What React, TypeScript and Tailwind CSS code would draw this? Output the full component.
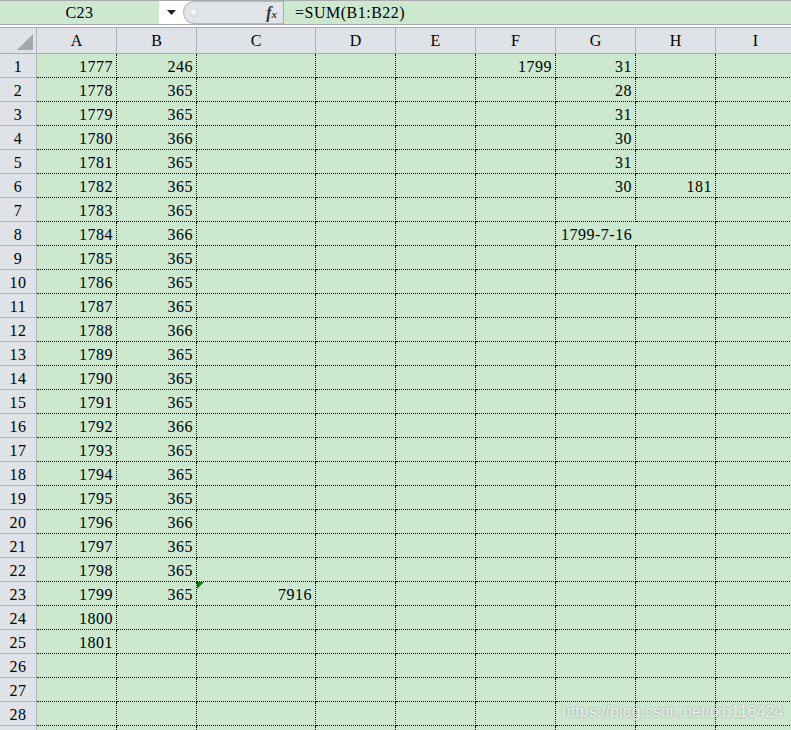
import React from "react";

const cols = [
  { l: "A", w: 80 },
  { l: "B", w: 80 },
  { l: "C", w: 119 },
  { l: "D", w: 80 },
  { l: "E", w: 80 },
  { l: "F", w: 80 },
  { l: "G", w: 80 },
  { l: "H", w: 80 },
  { l: "I", w: 80 },
];

const bVals = [
  "246", "365", "365", "366", "365", "365", "365", "366", "365", "365", "365", "366",
  "365", "365", "365", "366", "365", "365", "365", "366", "365", "365", "365",
];

function cellValue(r: number, c: string): string {
  if (c === "A" && r <= 25) return String(1776 + r);
  if (c === "B" && r <= 23) return bVals[r - 1];
  if (c === "F" && r === 1) return "1799";
  if (c === "G") {
    const g: Record<number, string> = { 1: "31", 2: "28", 3: "31", 4: "30", 5: "31", 6: "30" };
    if (g[r]) return g[r];
  }
  if (c === "H" && r === 6) return "181";
  if (c === "C" && r === 23) return "7916";
  return "";
}

const font = { fontFamily: '"Liberation Serif", "Noto Sans CJK SC", serif' };

export default function App() {
  const rows = Array.from({ length: 29 }, (_, i) => i + 1);
  return (
    <div
      className="relative w-[791px] h-[730px] overflow-hidden bg-[#cce8cf] text-black"
      style={font}
    >
      {/* formula bar */}
      <div className="flex h-[25px] border-t border-b border-[#a9abae] bg-[#cce8cf]">
        <div className="w-[159px] shrink-0 flex items-center justify-center text-[16px] tracking-[0.5px] pt-[1px]">
          C23
        </div>
        <div className="flex w-[124px] shrink-0 bg-white">
          <div className="w-[24px] flex items-center justify-center">
            <svg width="9" height="5" viewBox="0 0 9 5">
              <polygon points="0,0 9,0 4.5,5" fill="#222" />
            </svg>
          </div>
          <div className="relative flex-1 flex items-center justify-end pr-[6px] bg-[#e1e4e8] border-l border-t border-b border-[#b8bbbf] rounded-l-[14px]">
            <div className="absolute left-[6px] top-[7px] w-[8px] h-[8px] rounded-full bg-[radial-gradient(circle_at_40%_40%,#ffffff,#c4c7cb)]" />
            <span className="italic font-bold text-[16px] text-[#333] leading-none" style={font}>
              f<span className="text-[11px]">x</span>
            </span>
          </div>
        </div>
        <div className="flex-1 border-l border-[#a9abae] pl-[11px] flex items-center text-[16px] tracking-[0.5px] pt-[1px]">
          =SUM(B1:B22)
        </div>
      </div>
      <div className="h-[2px] bg-white" />
      {/* column header */}
      <div className="flex h-[27px] border-t border-b border-[#a9abae] bg-[#dfe2e7]">
        <div className="relative w-[37px] shrink-0 border-r border-[#b1b4b8]">
          <svg className="absolute left-[17px] top-[6px]" width="16" height="16" viewBox="0 0 16 16">
            <polygon points="0,16 16,16 16,0" fill="#a4a7ab" />
          </svg>
        </div>
        {cols.map((c) => (
          <div
            key={c.l}
            className="shrink-0 border-r border-[#b1b4b8] flex items-center justify-center text-[16px] pt-[1px]"
            style={{ width: c.w }}
          >
            {c.l}
          </div>
        ))}
      </div>
      {/* rows */}
      {rows.map((r) => (
        <div key={r} className="flex h-[24px]">
          <div className="w-[37px] shrink-0 bg-[#dfe2e7] border-r border-b border-[#b1b4b8] flex items-center justify-center text-[16px] tracking-[0.5px] pt-[2px]">
            {r <= 28 ? r : ""}
          </div>
          {cols.map((c) => {
            const v = cellValue(r, c.l);
            const overflowG = r === 8 && c.l === "G";
            return (
              <div
                key={c.l}
                className={
                  "relative shrink-0 border-b border-dotted border-black flex items-center text-[16px] tracking-[0.5px] pt-[2px] " +
                  (overflowG ? "border-r-0 overflow-visible" : "border-r")
                }
                style={{ width: c.w }}
              >
                {r === 23 && c.l === "C" && (
                  <svg className="absolute left-0 top-0" width="7" height="7" viewBox="0 0 7 7">
                    <polygon points="0,0 7,0 0,7" fill="#0a7d0a" />
                  </svg>
                )}
                {overflowG ? (
                  <span className="absolute left-[5px] whitespace-nowrap z-10">1799-7-16</span>
                ) : (
                  v && <span className="ml-auto pr-[3px]">{v}</span>
                )}
              </div>
            );
          })}
        </div>
      ))}
      {/* watermark */}
      <div
        className="absolute left-[562px] top-[700px] text-[16px] text-white/80 whitespace-nowrap"
        style={{ fontFamily: '"Liberation Sans", Arial, sans-serif', textShadow: "0 0 2px rgba(110,110,110,0.7)" }}
      >
        https://blog.csdn.net/txb116424
      </div>
    </div>
  );
}
